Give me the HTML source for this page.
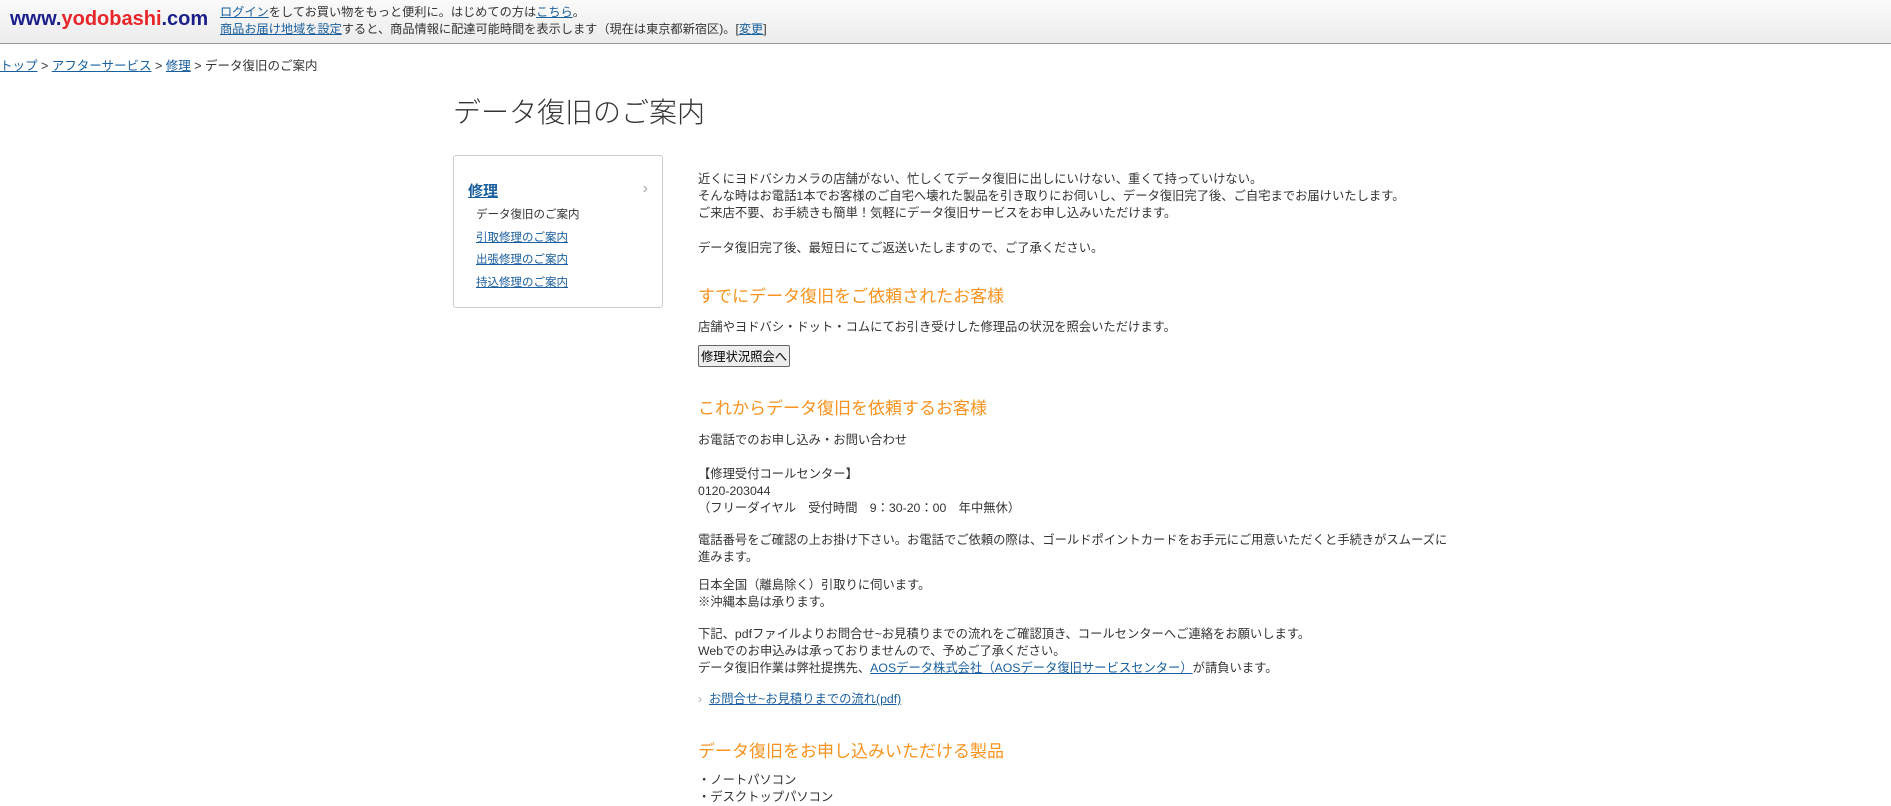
<!DOCTYPE html>
<html><head><meta charset="utf-8">
<style>
*{margin:0;padding:0;box-sizing:border-box}
body{width:1891px;height:800px;overflow:hidden;background:#fff;font-family:"Liberation Sans","Noto Sans CJK JP",sans-serif;color:#333;font-size:13px;position:relative}
a{color:#1a5f9e;text-decoration:underline}
.hdr{position:absolute;left:0;top:0;width:1891px;height:44px;background:linear-gradient(#fafafa,#ececec);border-bottom:1px solid #999}
.logo{position:absolute;left:10px;top:8px;font-size:20px;font-weight:bold;letter-spacing:0px}
.logo .n{color:#1b1f8a}.logo .r{color:#e8262a}
.ht{position:absolute;left:220px;top:4px;font-size:12.2px;line-height:17px;color:#333}
.bc{position:absolute;left:0;top:55px;font-size:12.5px}
.ttl{position:absolute;left:453px;top:91px;font-size:28px;font-weight:300;color:#333}
.side{position:absolute;left:453px;top:155px;width:210px;height:153px;border:1px solid #ccc;border-radius:3px}
.side .h{position:absolute;left:14px;top:24px;font-size:15px;font-weight:bold}
.side .ar{position:absolute;right:14px;top:24px;color:#aaa;font-size:16px}
.side .i{position:absolute;left:22px;font-size:11.5px}
.c{position:absolute;left:698px;width:760px;font-size:12.3px;line-height:17px}
.o{position:absolute;left:698px;color:#f7931e;font-size:17px}
button{font-family:inherit;font-size:12.3px;padding:1px 2px;border:1px solid #666;border-radius:2px;background:#eee;color:#000}
</style></head><body>
<div class="hdr">
<div class="logo"><span class="n">www.</span><span class="r">yodobashi</span><span class="n">.com</span></div>
<div class="ht"><a href="#">ログイン</a>をしてお買い物をもっと便利に。はじめての方は<a href="#">こちら</a>。<br><a href="#">商品お届け地域を設定</a>すると、商品情報に配達可能時間を表示します（現在は東京都新宿区)。[<a href="#">変更</a>]</div>
</div>
<div class="bc"><a href="#">トップ</a> &gt; <a href="#">アフターサービス</a> &gt; <a href="#">修理</a> &gt; データ復旧のご案内</div>
<div class="ttl">データ復旧のご案内</div>
<div class="side">
<a class="h" href="#">修理</a><span class="ar">›</span>
<div class="i" style="top:50px">データ復旧のご案内</div>
<a class="i" href="#" style="top:73px">引取修理のご案内</a>
<a class="i" href="#" style="top:95px">出張修理のご案内</a>
<a class="i" href="#" style="top:118px">持込修理のご案内</a>
</div>
<div class="c" style="top:171px">近くにヨドバシカメラの店舗がない、忙しくてデータ復旧に出しにいけない、重くて持っていけない。<br>そんな時はお電話1本でお客様のご自宅へ壊れた製品を引き取りにお伺いし、データ復旧完了後、ご自宅までお届けいたします。<br>ご来店不要、お手続きも簡単！気軽にデータ復旧サービスをお申し込みいただけます。</div>
<div class="c" style="top:240px">データ復旧完了後、最短日にてご返送いたしますので、ご了承ください。</div>
<div class="o" style="top:282px">すでにデータ復旧をご依頼されたお客様</div>
<div class="c" style="top:319px">店舗やヨドバシ・ドット・コムにてお引き受けした修理品の状況を照会いただけます。</div>
<div class="c" style="top:345px"><button>修理状況照会へ</button></div>
<div class="o" style="top:394px">これからデータ復旧を依頼するお客様</div>
<div class="c" style="top:432px">お電話でのお申し込み・お問い合わせ</div>
<div class="c" style="top:466px">【修理受付コールセンター】<br>0120-203044<br>（フリーダイヤル　受付時間　9：30-20：00　年中無休）</div>
<div class="c" style="top:532px">電話番号をご確認の上お掛け下さい。お電話でご依頼の際は、ゴールドポイントカードをお手元にご用意いただくと手続きがスムーズに<br>進みます。</div>
<div class="c" style="top:577px">日本全国（離島除く）引取りに伺います。<br>※沖縄本島は承ります。</div>
<div class="c" style="top:626px">下記、pdfファイルよりお問合せ~お見積りまでの流れをご確認頂き、コールセンターへご連絡をお願いします。<br>Webでのお申込みは承っておりませんので、予めご了承ください。<br>データ復旧作業は弊社提携先、<a href="#">AOSデータ株式会社（AOSデータ復旧サービスセンター）</a>が請負います。</div>
<div class="c" style="top:691px"><span style="color:#aaa">›</span>&nbsp; <a href="#">お問合せ~お見積りまでの流れ(pdf)</a></div>
<div class="o" style="top:737px">データ復旧をお申し込みいただける製品</div>
<div class="c" style="top:772px">・ノートパソコン<br>・デスクトップパソコン</div>
</body></html>
